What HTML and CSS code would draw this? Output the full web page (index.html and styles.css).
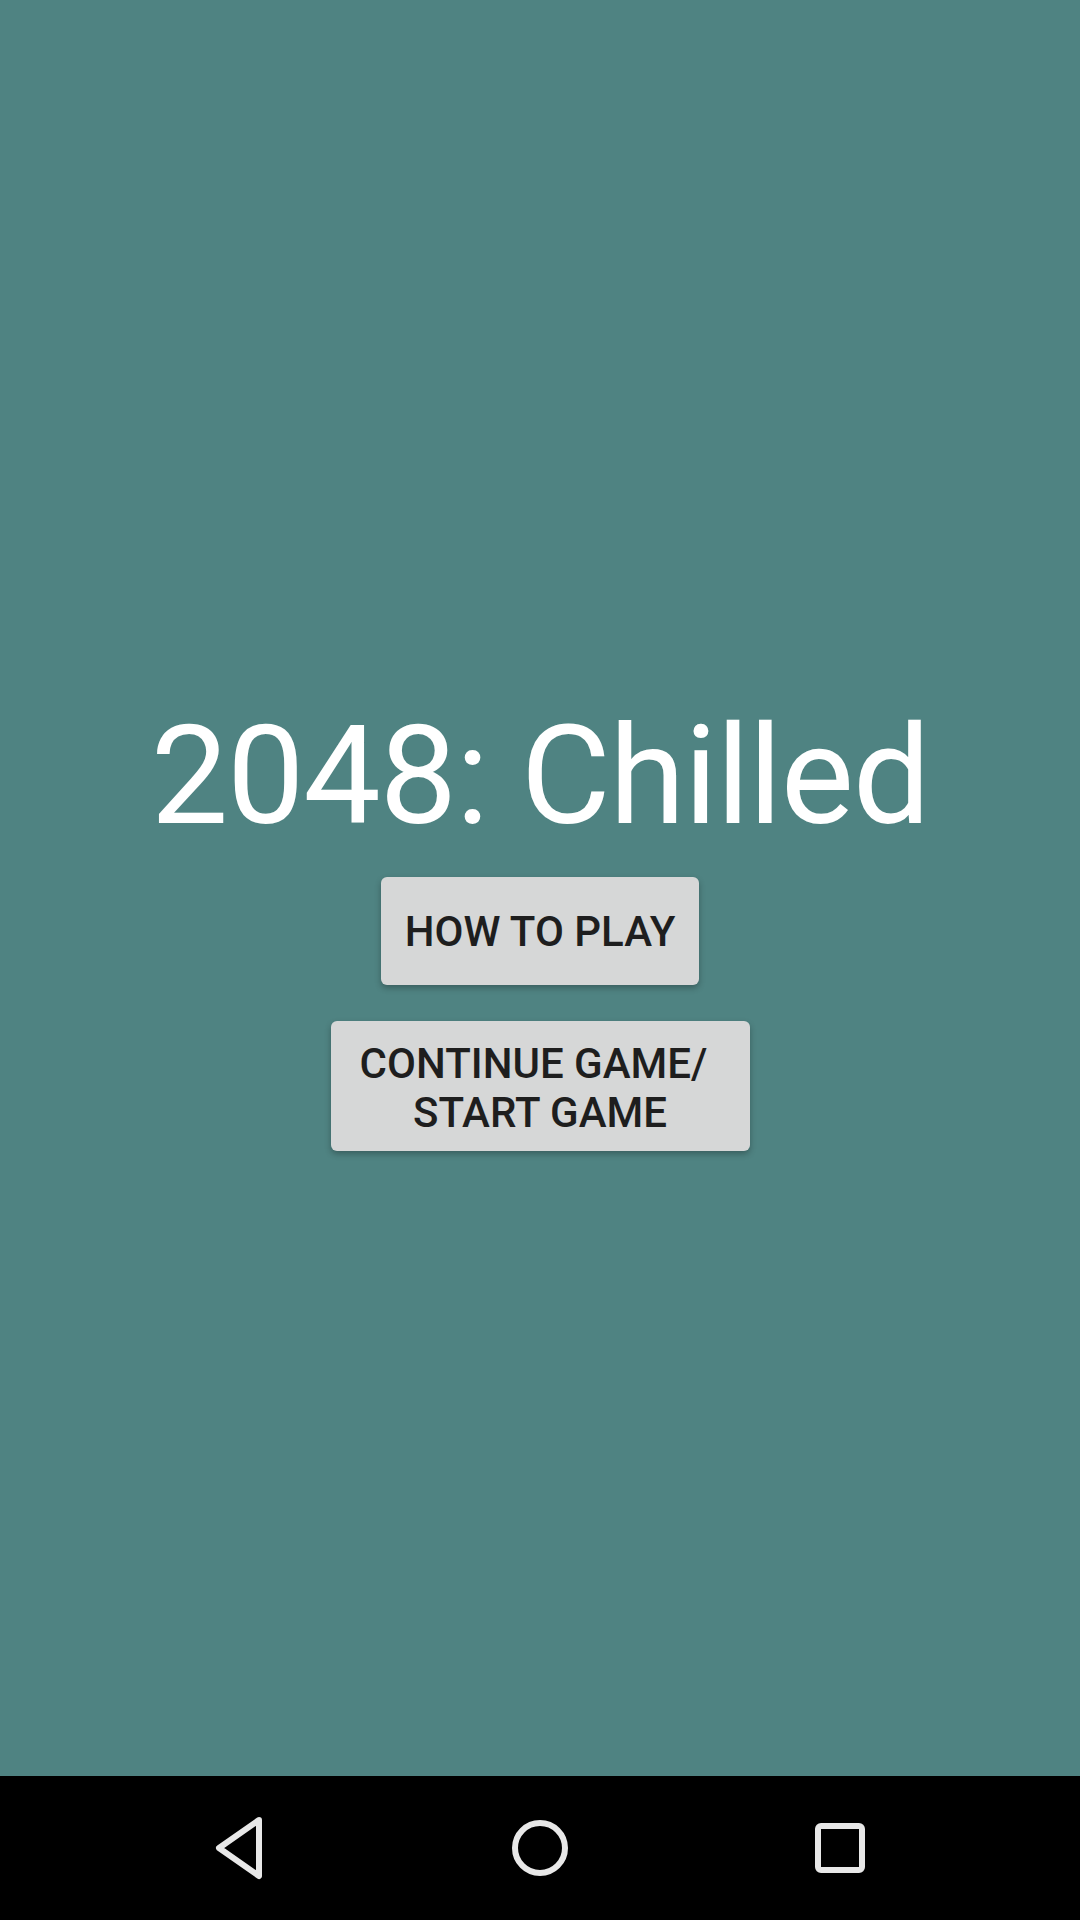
FILE: index.html
```html
<!DOCTYPE html>
<html>
<head>
<meta charset="utf-8">
<link rel="stylesheet" href="styles.css">
</head>
<body>
<div class="screen">
  <main class="content">
    <h1 class="title">2048: Chilled</h1>
    <button class="btn btn-how">HOW TO PLAY</button>
    <button class="btn btn-continue"><span class="line line1">CONTINUE GAME/</span><span class="line">START GAME</span></button>
  </main>
  <nav class="navbar">
    <svg class="nav-icon" width="60" height="70" viewBox="0 0 60 70"><path d="M49 7 L9 35 L49 63 Z" fill="none" stroke="#e8e8e8" stroke-width="6" stroke-linejoin="round"/></svg>
    <svg class="nav-icon" width="60" height="70" viewBox="0 0 60 70"><circle cx="30" cy="35" r="25" fill="none" stroke="#e8e8e8" stroke-width="6"/></svg>
    <svg class="nav-icon" width="60" height="70" viewBox="0 0 60 70"><rect x="8" y="13" width="44" height="44" rx="3" fill="none" stroke="#e8e8e8" stroke-width="6"/></svg>
  </nav>
</div>
</body>
</html>
```
FILE: styles.css
```css
html, body {
  margin: 0;
  padding: 0;
}
body {
  width: 1080px;
  height: 1920px;
  overflow: hidden;
  font-family: Roboto, "Noto Sans", sans-serif;
}
.screen {
  display: flex;
  flex-direction: column;
  width: 1080px;
  height: 1920px;
}
.content {
  flex: 1;
  background: #4f8382;
  display: flex;
  flex-direction: column;
  align-items: center;
  padding-top: 707px;
  box-sizing: border-box;
}
.title {
  margin: 0;
  font-family: Roboto, sans-serif;
  font-weight: 400;
  font-size: 138px;
  line-height: 138px;
  color: #ffffff;
  letter-spacing: -1.3px;
}
.btn {
  border: none;
  background: #d6d7d7;
  border-radius: 6px;
  box-shadow: 0 3px 6px rgba(0,0,0,0.28);
  color: #1e1e1e;
  font-family: Roboto, sans-serif;
  font-weight: 500;
  font-size: 42px;
  padding: 0;
  display: flex;
  flex-direction: column;
  align-items: center;
  justify-content: center;
}
.btn-how {
  margin-top: 32px;
  width: 318px;
  height: 108px;
  line-height: 49px;
}
.btn-continue {
  margin-top: 36px;
  width: 419px;
  height: 130px;
  line-height: 49px;
  padding-top: 3px;
}
.line {
  display: block;
}
.line1 {
  margin-right: 13px;
}
.navbar {
  height: 144px;
  background: #000;
  display: flex;
  align-items: center;
  justify-content: space-between;
  padding: 0 210px 0 210px;
}
.nav-icon {
  display: block;
}
```
